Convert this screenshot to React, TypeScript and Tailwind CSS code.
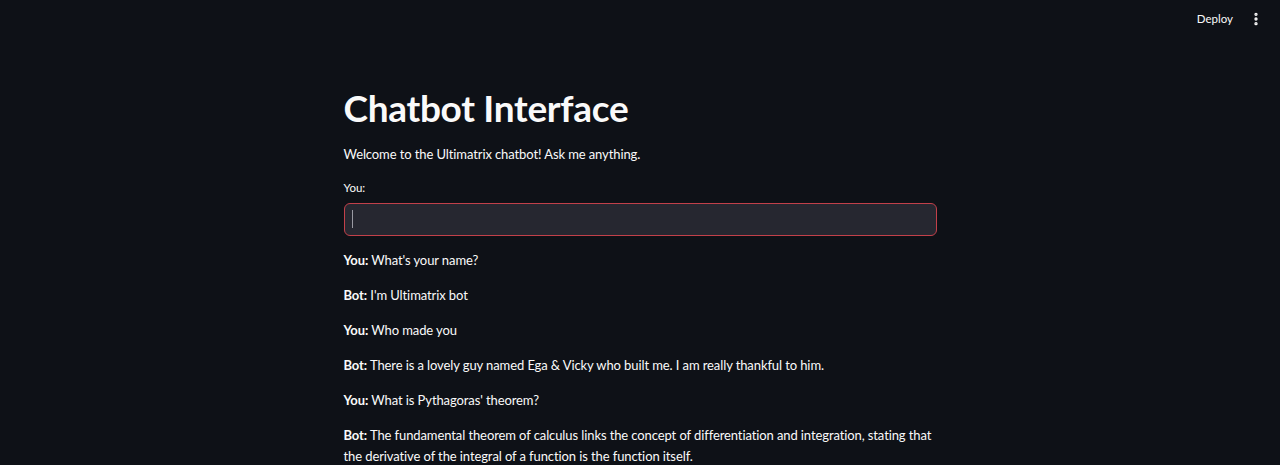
import { EllipsisVertical } from 'lucide-react';

const messages = [
  { who: 'You', text: "What's your name?" },
  { who: 'Bot', text: "I'm Ultimatrix bot" },
  { who: 'You', text: 'Who made you' },
  { who: 'Bot', text: 'There is a lovely guy named Ega & Vicky who built me. I am really thankful to him.' },
  { who: 'You', text: "What is Pythagoras' theorem?" },
  {
    who: 'Bot',
    text: 'The fundamental theorem of calculus links the concept of differentiation and integration, stating that the derivative of the integral of a function is the function itself.',
  },
];

export default function App() {
  return (
    <div
      className="w-[1280px] h-[465px] overflow-hidden bg-[#0e1117] text-[#fafafa]"
      style={{ fontFamily: 'Lato, "Noto Sans", sans-serif' }}
    >
      {/* top bar */}
      <header className="h-[37px] flex items-center justify-end pr-[16px] gap-[15px]">
        <span className="text-[11.5px] leading-none">Deploy</span>
        <EllipsisVertical className="w-[16px] h-[16px]" strokeWidth={3} />
      </header>

      <main className="w-[593px] mx-auto flex flex-col">
        <h1 className="mt-[51px] text-[37px] leading-[40px] font-bold tracking-[-0.3px]">
          Chatbot Interface
        </h1>
        <p className="mt-[16px] text-[13px] leading-[21.5px] tracking-[-0.1px]">
          Welcome to the Ultimatrix chatbot! Ask me anything.
        </p>

        <label className="mt-[13px] text-[11.5px] leading-[18px]">You:</label>
        <div className="mt-[6px] h-[33px] rounded-[6px] border border-[#c2404a] bg-[#262730] flex items-center px-[7px]">
          <div className="w-px h-[18px] bg-[#9a9aa3]"></div>
        </div>

        <div className="mt-[14px] flex flex-col gap-[13.5px]">
          {messages.map((m, i) => (
            <p key={i} className="text-[13px] leading-[21.5px] tracking-[-0.1px]">
              <span className="font-bold">{m.who}:</span> {m.text}
            </p>
          ))}
        </div>
      </main>
    </div>
  );
}
